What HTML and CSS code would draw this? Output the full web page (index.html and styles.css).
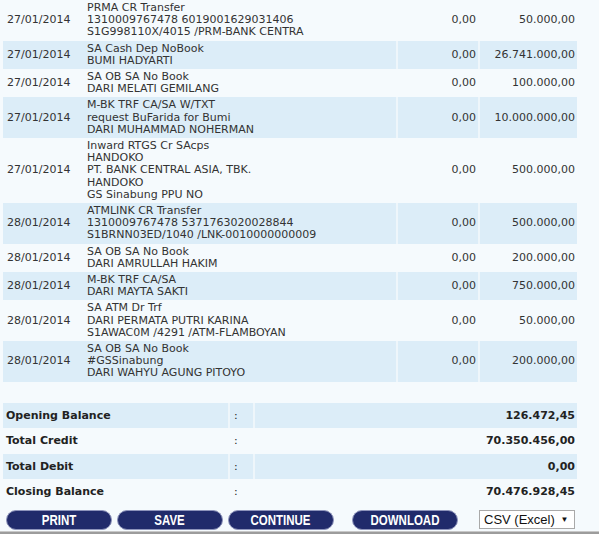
FILE: index.html
```html
<!DOCTYPE html>
<html lang="en">
<head>
  <meta charset="UTF-8">
  <title>Account Statement</title>
  <link rel="stylesheet" href="styles.css">
</head>
<body>

<div class="statement">
  <table class="mutasi">
    <colgroup>
      <col class="c-date"><col class="c-desc"><col class="c-debit"><col class="c-credit">
    </colgroup>
    <tr>
      <td class="date">27/01/2014</td>
      <td class="desc">PRMA CR Transfer<br>1310009767478 6019001629031406<br>S1G998110X/4015 /PRM-BANK CENTRA</td>
      <td class="amt">0,00</td>
      <td class="amt">50.000,00</td>
    </tr>
    <tr class="alt">
      <td class="date">27/01/2014</td>
      <td class="desc">SA Cash Dep NoBook<br>BUMI HADYARTI</td>
      <td class="amt">0,00</td>
      <td class="amt">26.741.000,00</td>
    </tr>
    <tr>
      <td class="date">27/01/2014</td>
      <td class="desc">SA OB SA No Book<br>DARI MELATI GEMILANG</td>
      <td class="amt">0,00</td>
      <td class="amt">100.000,00</td>
    </tr>
    <tr class="alt">
      <td class="date">27/01/2014</td>
      <td class="desc">M-BK TRF CA/SA W/TXT<br>request BuFarida for Bumi<br>DARI MUHAMMAD NOHERMAN</td>
      <td class="amt">0,00</td>
      <td class="amt">10.000.000,00</td>
    </tr>
    <tr>
      <td class="date">27/01/2014</td>
      <td class="desc">Inward RTGS Cr SAcps<br>HANDOKO<br>PT. BANK CENTRAL ASIA, TBK.<br>HANDOKO<br>GS Sinabung PPU NO</td>
      <td class="amt">0,00</td>
      <td class="amt">500.000,00</td>
    </tr>
    <tr class="alt">
      <td class="date">28/01/2014</td>
      <td class="desc">ATMLINK CR Transfer<br>1310009767478 5371763020028844<br>S1BRNN03ED/1040 /LNK-0010000000009</td>
      <td class="amt">0,00</td>
      <td class="amt">500.000,00</td>
    </tr>
    <tr>
      <td class="date">28/01/2014</td>
      <td class="desc">SA OB SA No Book<br>DARI AMRULLAH HAKIM</td>
      <td class="amt">0,00</td>
      <td class="amt">200.000,00</td>
    </tr>
    <tr class="alt">
      <td class="date">28/01/2014</td>
      <td class="desc">M-BK TRF CA/SA<br>DARI MAYTA SAKTI</td>
      <td class="amt">0,00</td>
      <td class="amt">750.000,00</td>
    </tr>
    <tr>
      <td class="date">28/01/2014</td>
      <td class="desc">SA ATM Dr Trf<br>DARI PERMATA PUTRI KARINA<br>S1AWAC0M /4291 /ATM-FLAMBOYAN</td>
      <td class="amt">0,00</td>
      <td class="amt">50.000,00</td>
    </tr>
    <tr class="alt">
      <td class="date">28/01/2014</td>
      <td class="desc">SA OB SA No Book<br>#GSSinabung<br>DARI WAHYU AGUNG PITOYO</td>
      <td class="amt">0,00</td>
      <td class="amt">200.000,00</td>
    </tr>
  </table>

  <table class="summary">
    <colgroup>
      <col class="c-label"><col class="c-colon"><col class="c-value">
    </colgroup>
    <tr class="alt">
      <td class="label">Opening Balance</td>
      <td class="colon">:</td>
      <td class="value">126.472,45</td>
    </tr>
    <tr>
      <td class="label">Total Credit</td>
      <td class="colon">:</td>
      <td class="value">70.350.456,00</td>
    </tr>
    <tr class="alt">
      <td class="label">Total Debit</td>
      <td class="colon">:</td>
      <td class="value">0,00</td>
    </tr>
    <tr>
      <td class="label">Closing Balance</td>
      <td class="colon">:</td>
      <td class="value">70.476.928,45</td>
    </tr>
  </table>

  <div class="actions">
    <button class="btn"><span>PRINT</span></button>
    <button class="btn"><span>SAVE</span></button>
    <button class="btn"><span>CONTINUE</span></button>
    <button class="btn btn-download"><span>DOWNLOAD</span></button>
    <div class="format-select">CSV (Excel) <span class="arrow">&#9660;</span></div>
  </div>
</div>

<div class="bottom-bar"></div>

</body>
</html>
```

FILE: styles.css
```css
/* General */
body {
  margin: 0;
  padding: 0;
  background: #f5fafd;
  font-family: "DejaVu Sans", Verdana, sans-serif;
  font-size: 11px;
  color: #333;
  height: 534px;
  overflow: hidden;
  position: relative;
}
.statement {
  padding-left: 3px;
  width: 574px;
}
table {
  border-collapse: separate;
  border-spacing: 0;
  table-layout: fixed;
  width: 574px;
}
td {
  padding: 0;
}
tr.alt td {
  background: #dcedf8;
}

/* Transactions */
.c-date { width: 80px; }
.c-desc { width: 313px; }
.c-debit { width: 82px; }
.c-credit { width: 99px; }
.mutasi td {
  line-height: 12.2px;
  padding-top: 2px;
  padding-bottom: 2px;
  vertical-align: middle;
}
.mutasi .date {
  padding-left: 4px;
}
.mutasi .desc {
  padding-left: 4px;
  white-space: nowrap;
}
.mutasi .amt {
  text-align: right;
  padding-right: 2px;
  border-left: 2px solid #eef6fb;
}
tr:not(.alt) .amt {
  border-left-color: transparent;
}

/* Summary */
.summary {
  margin-top: 21px;
  color: #222;
}
.c-label { width: 225px; }
.c-colon { width: 25px; }
.c-value { width: 324px; }
.summary td {
  height: 25.5px;
  vertical-align: middle;
}
.summary .label {
  font-weight: bold;
  padding-left: 3px;
}
.summary .colon {
  padding-left: 4px;
  border-left: 2px solid #eef6fb;
}
.summary .value {
  font-weight: bold;
  text-align: right;
  padding-right: 2px;
  border-left: 2px solid #eef6fb;
}
.summary tr:not(.alt) td {
  border-left-color: transparent;
}

/* Buttons */
.actions {
  display: flex;
  align-items: center;
  margin-top: 5px;
  padding-left: 3px;
}
.btn {
  width: 106px;
  height: 20px;
  margin-right: 5px;
  padding: 0;
  border: 1px solid #8e94bb;
  border-radius: 10px;
  background: #212b6b;
  color: #fff;
  font-family: "Liberation Sans", Arial, sans-serif;
  font-weight: bold;
  font-size: 14px;
  line-height: 18px;
  cursor: pointer;
}
.btn span {
  display: inline-block;
  transform: scaleX(0.82);
}
.btn-download {
  margin-left: 13px;
}
.format-select {
  margin-left: 16px;
  width: 90px;
  height: 17px;
  border: 1px solid #a9a9a9;
  background: #fff;
  color: #111;
  font-family: "Liberation Sans", Arial, sans-serif;
  font-size: 13px;
  line-height: 17px;
  padding-left: 4px;
}
.format-select .arrow {
  font-size: 8px;
  vertical-align: 2px;
  margin-left: 2px;
}
.bottom-bar {
  position: absolute;
  left: 0;
  right: 0;
  bottom: 0;
  height: 2px;
  background: #9c9c9c;
  border-top: 1px solid #c8c8c8;
}
```
